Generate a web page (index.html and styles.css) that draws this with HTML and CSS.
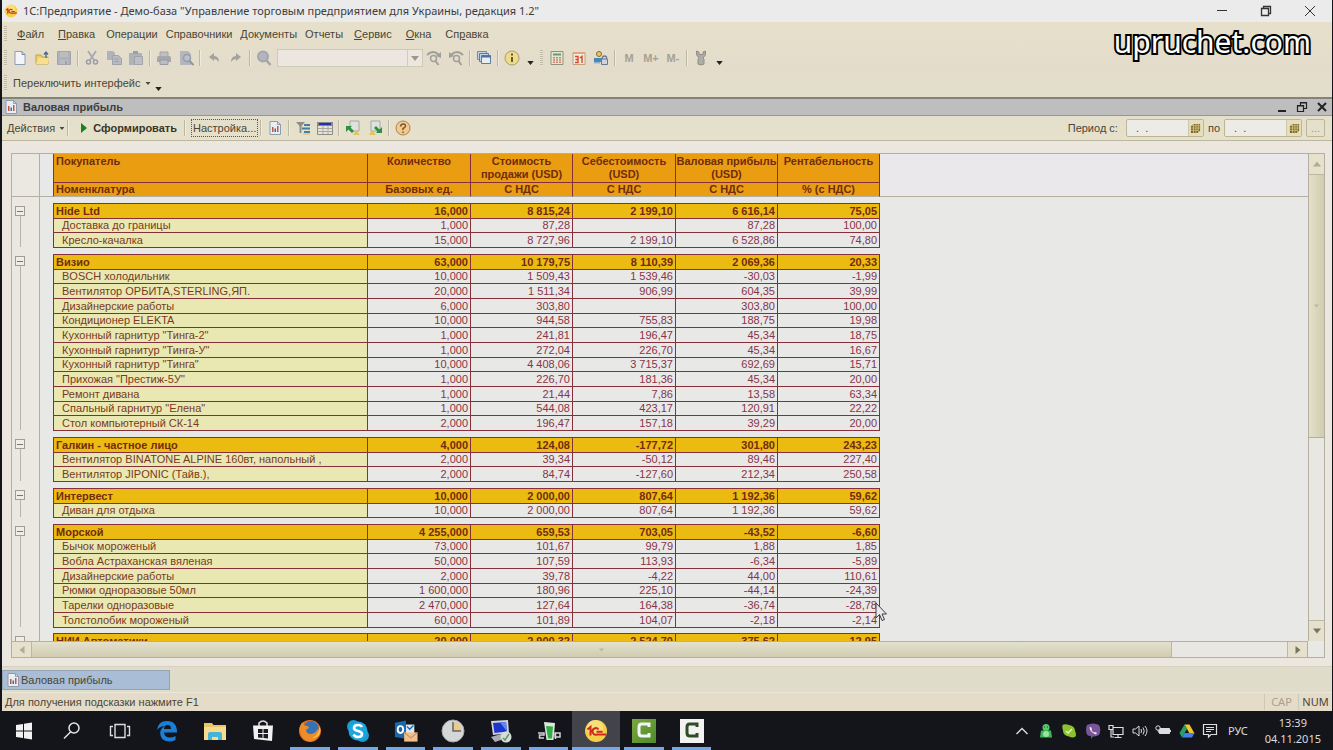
FILE: index.html
```html
<!DOCTYPE html>
<html lang="ru">
<head>
<meta charset="utf-8">
<title>1С:Предприятие - Валовая прибыль</title>
<link rel="stylesheet" href="styles.css">
</head>
<body>
<svg class="defs" aria-hidden="true">
  <symbol id="report" viewBox="0 0 14 14"><path d="M2 .5h7.500l3 3v10H2z" fill="#e9eef3" stroke="#8b9cae"/><path d="M9.500.5v3h3" fill="none" stroke="#8b9cae"/><path d="M4 6h1.500v5H4z" fill="#b8583e"/><path d="M6.500 7.500H8V11H6.500z" fill="#53658f"/><path d="M9 5h1.500v6H9z" fill="#c0574c"/></symbol>
  <symbol id="calgrid" viewBox="0 0 12 12"><path d="M3 1h8v8H9v2H1V3h2z" fill="#7b6a2c"/><path d="M1 5.500h10M1 8h8M3.800 1v10M6.500 1v10M9 1v8M3 3h8" stroke="#d8cb8c" stroke-width=".8" fill="none"/></symbol>
  <symbol id="down" viewBox="0 0 8 5"><path d="M0 0h8L4 5z" fill="currentColor"/></symbol>
  <symbol id="onec" viewBox="0 0 24 24"><circle cx="12" cy="12" r="11" fill="#f6cf4a"/><circle cx="11" cy="9" r="8" fill="#fbe58d" opacity=".7"/><path d="M3.500 10.500L6.500 8V16.500M14.500 10.500a3.300 3.300 0 1 0-1.500 5H22M12.500 12.800h6" fill="none" stroke="#d02a1c" stroke-width="2"/></symbol>
  <symbol id="camt" viewBox="0 0 24 24"><path d="M17 8V5H9.500Q7 5 7 8v6q0 3 3 3h7v-3" fill="none" stroke="currentColor" stroke-width="3"/></symbol>
</svg>

<main class="app">
  <header class="titlebar">
    <svg class="i14"><use href="#onec"/></svg>
    <h1>1С:Предприятие - Демо-база "Управление торговым предприятием для Украины, редакция 1.2"</h1>
    <button aria-label="Свернуть"><svg viewBox="0 0 12 12"><path d="M1 5.500h10" stroke="#333"/></svg></button>
    <button aria-label="Восстановить"><svg viewBox="0 0 12 12"><path d="M1.500 3.500h7v7h-7zM3.500 3V1.500h7v7H9" fill="none" stroke="#333" stroke-width="1.300"/></svg></button>
    <button aria-label="Закрыть"><svg viewBox="0 0 12 12"><path d="M1 1l10 10M11 1L1 11" stroke="#333"/></svg></button>
  </header>

  <section class="bars">
    <p class="watermark">upruchet.com</p>
    <nav class="menu">
      <i class="grip"></i>
      <button class="wide"><u>Ф</u>айл</button><button class="wide"><u>П</u>равка</button><button>Операции</button><button>Справочники</button><button>Документы</button><button>Отчеты</button><button class="wide"><u>С</u>ервис</button><button class="wide"><u>О</u>кна</button><button class="wide">Сп<u>р</u>авка</button>
    </nav>
    <div class="tools">
      <i class="grip"></i>
      <button aria-label="Новый"><svg viewBox="0 0 16 16"><path d="M3 1.500h7l3 3v10H3z" fill="#f3f5f8" stroke="#8b9fb5"/><path d="M10 1.500v3h3" fill="none" stroke="#6f8bab"/></svg></button>
      <button aria-label="Открыть"><svg viewBox="0 0 16 16"><path d="M2 14V5h5l1 2h6v7z" fill="#f0cf66" stroke="#c2a14a"/><path d="M2 14l2-6h11l-1 6z" fill="#f7df8d"/><path d="M12 8V3M10 4.500L12 2l2 2.500" fill="none" stroke="#4d6890" stroke-width="1.300"/></svg></button>
      <button aria-label="Сохранить"><svg viewBox="0 0 16 16"><path d="M1.500 1.500h13v13h-13z" fill="#b0b2ba" stroke="#a3a5ad"/><path d="M4 2h8v5H4zM4 10h8v4H4z" fill="#bcbdc3"/><path d="M9 11h2v3H9z" fill="#a0a2aa"/></svg></button>
      <i class="sep"></i>
      <button aria-label="Вырезать"><svg viewBox="0 0 16 16"><path d="M4 1l6 9M12 1L6 10" stroke="#a6a9b3" stroke-width="1.800"/><circle cx="4.500" cy="12" r="2" fill="none" stroke="#999da8" stroke-width="1.500"/><circle cx="11.500" cy="12" r="2" fill="none" stroke="#999da8" stroke-width="1.500"/></svg></button>
      <button aria-label="Копировать"><svg viewBox="0 0 16 16"><path d="M1 1h6l2 2v7H1z" fill="#b0b3bb"/><path d="M6.500 5.500h6l3 3v6h-9z" fill="#b9bbc1" stroke="#a0a3ac"/><path d="M8 9h5M8 11.500h5" stroke="#a0a3ac"/></svg></button>
      <button aria-label="Вставить"><svg viewBox="0 0 16 16"><path d="M1 3h13v12H1z" fill="#b0b2b9"/><path d="M5 1h5v3H5z" fill="#9c9fa8"/><path d="M6.500 6.500h8v8h-8z" fill="#bdbfc5" stroke="#a0a3ac"/></svg></button>
      <i class="sep"></i>
      <button aria-label="Печать"><svg viewBox="0 0 16 16"><path d="M4 2h8v5H4z" fill="#c0c0c2" stroke="#a3a4a8"/><path d="M3 6h10q2 0 2 2v4H1V8q0-2 2-2z" fill="#a6a7ad"/><path d="M4 10h8v4.500H4z" fill="#bcbdc3" stroke="#999aa2"/></svg></button>
      <button aria-label="Просмотр"><svg viewBox="0 0 16 16"><path d="M2 1h8l3 3v11H2z" fill="#b3b6be"/><circle cx="9" cy="8" r="3.500" fill="#bdc0c6" stroke="#999ca6" stroke-width="1.500"/><path d="M11.500 11l4 4" stroke="#92959f" stroke-width="2"/></svg></button>
      <i class="sep"></i>
      <button aria-label="Отменить"><svg viewBox="0 0 16 16"><path d="M3 7l5-4v3q5 0 5 6-2-3-5-3v2z" fill="#a2a29e"/></svg></button>
      <button aria-label="Вернуть"><svg viewBox="0 0 16 16"><path d="M13 7L8 3v3q-5 0-5 6 2-3 5-3v2z" fill="#a2a29e"/></svg></button>
      <i class="sep"></i>
      <button aria-label="Найти"><svg viewBox="0 0 16 16"><circle cx="7" cy="6.500" r="5" fill="#b2b5bb" stroke="#a3a6ae" stroke-width="2"/><path d="M10.500 10.500l4 4.500" stroke="#a3a6ad" stroke-width="2.500"/></svg></button>
      <label class="combo"><input type="text" aria-label="Строка поиска"><button aria-label="Список"><svg><use href="#down"/></svg></button></label>
      <button aria-label="Найти следующий"><svg viewBox="0 0 16 16"><path d="M1 5q6-6 12 0" fill="none" stroke="#a09f9c" stroke-width="2"/><path d="M15 2v6l-5-2z" fill="#a09f9c"/><circle cx="7.500" cy="8.500" r="3" fill="none" stroke="#a09f9c" stroke-width="1.500"/><path d="M9.500 11l3 4" stroke="#a09f9c" stroke-width="2"/></svg></button>
      <button aria-label="Найти предыдущий"><svg viewBox="0 0 16 16"><path d="M15 5Q9-1 3 5" fill="none" stroke="#a09f9c" stroke-width="2"/><path d="M1 2v6l5-2z" fill="#a09f9c"/><circle cx="8.500" cy="8.500" r="3" fill="none" stroke="#a09f9c" stroke-width="1.500"/><path d="M10.500 11l3 4" stroke="#a09f9c" stroke-width="2"/></svg></button>
      <i class="sep"></i>
      <button aria-label="Окна"><svg viewBox="0 0 16 16"><path d="M1.500 1.500h9v8h-9z" fill="#c5d4e5" stroke="#6d8db0"/><path d="M3.500 3.500h9v8h-9z" fill="#c5d4e5" stroke="#5a7ca6"/><path d="M5.500 5.500h9v8h-9z" fill="#e8edf2" stroke="#5a7ca6"/><path d="M5 6.500h10" stroke="#4d72a0" stroke-width="2"/></svg></button>
      <i class="sep"></i>
      <button aria-label="О программе"><svg viewBox="0 0 16 16"><circle cx="8" cy="8" r="7" fill="#eedc8b" stroke="#aa9c71"/><path d="M7 7h2v5H7zM7 3.500h2v2H7z" fill="#625b34"/></svg></button>
      <span class="more"><svg><use href="#down"/></svg></span>
      <i class="grip grip-mid"></i>
      <button aria-label="Калькулятор"><svg viewBox="0 0 16 16"><path d="M2 1.500h12v13H2z" fill="#e7e5d2" stroke="#8f917f"/><path d="M4 3.500h8v2H4z" fill="#58a173"/><path d="M5 7v6M8 7v6M11 7v6" stroke="#c06a4f" stroke-width="1.500" stroke-dasharray="1.500 .8"/></svg></button>
      <button aria-label="Календарь"><svg viewBox="0 0 16 16"><path d="M2 2.500h12v12H2z" fill="#f3ead9" stroke="#c3a07c"/><path d="M2 2h12v2H2z" fill="#e2a57e"/><path d="M4 6.500h3v6H4M4.500 9.500H7M9 8l2-1.500V13" fill="none" stroke="#d6482e" stroke-width="1.400"/></svg></button>
      <button aria-label="Пользователи"><svg viewBox="0 0 16 16"><circle cx="6" cy="4" r="2.500" fill="#ecc75d" stroke="#816e36"/><path d="M1 8h9v4H1z" fill="#4c86b4"/><path d="M1 12h6v1.500H1z" fill="#8fb4d0"/><path d="M9.500 9V7q2-2 4 0v2" fill="none" stroke="#6d7690" stroke-width="1.300"/><path d="M8.500 9h6v5.500h-6z" fill="#cfd3df" stroke="#6d7690"/></svg></button>
      <i class="sep"></i>
      <button class="mem">M</button><button class="mem">M+</button><button class="mem">M-</button>
      <i class="sep"></i>
      <button aria-label="Сервис"><svg viewBox="0 0 16 16"><path d="M3.500 1v3q0 2 2 3v1.500L5 9v5q3 2 6 0V9l-.5-.5V7q2-1 2-3V1L10 2v2.500H6V2z" fill="#aeaca7" stroke="#908e8a"/></svg></button>
      <span class="more"><svg><use href="#down"/></svg></span>
    </div>
    <div class="iface">
      <i class="grip"></i>
      <button>Переключить интерфейс <svg class="tri"><use href="#down"/></svg></button>
      <span class="more"><svg><use href="#down"/></svg></span>
    </div>
  </section>

  <section class="doc">
    <header class="doctitle">
      <svg class="i14"><use href="#report"/></svg>
      <h2>Валовая прибыль</h2>
      <button aria-label="Свернуть окно"><svg viewBox="0 0 12 12"><path d="M2 10h8" stroke="#222" stroke-width="2"/></svg></button>
      <button aria-label="Восстановить окно"><svg viewBox="0 0 12 12"><path d="M1.500 4.500h6v6h-6zM1 5h7M4.500 4V1.500h6v6H8M4 2h7" fill="none" stroke="#222" stroke-width="1.200"/></svg></button>
      <button aria-label="Закрыть окно"><svg viewBox="0 0 12 12"><path d="M2 2l8 8M10 2l-8 8" stroke="#222" stroke-width="2"/></svg></button>
    </header>
    <div class="doctools">
      <button class="actions">Действия <svg class="tri"><use href="#down"/></svg></button>
      <i class="sep"></i>
      <button class="run"><svg viewBox="0 0 6 10"><path d="M0 0l6 5-6 5z" fill="#188023"/></svg>Сформировать</button>
      <i class="sep"></i>
      <button class="setup">Настройка...</button>
      <i class="sep"></i>
      <button class="ib" aria-label="Отчет"><svg class="small"><use href="#report"/></svg></button>
      <i class="sep"></i>
      <button class="ib" aria-label="Отбор"><svg viewBox="0 0 16 16"><path d="M1 2h9L6.500 6v7h-2V6z" fill="#8d8f83"/><path d="M9 5h6M7 8.500h8M9 12h6" stroke="#427ea5" stroke-width="2"/><path d="M8 14h7" stroke="#e0b858"/></svg></button>
      <button class="ib" aria-label="Шапка"><svg viewBox="0 0 16 16"><path d="M.5 2.500h15v12H.5z" fill="#e5e3da" stroke="#8e8d84"/><path d="M0 2h16v4H0z" fill="#85868f"/><path d="M2 3h12v2H2z" fill="#2730a8"/><path d="M1 8.500h14M1 11.500h14M6 6v8M11 6v8" stroke="#aaa9a0"/></svg></button>
      <i class="sep"></i>
      <button class="ib" aria-label="Восстановить значения"><svg viewBox="0 0 16 16"><path d="M5 1h9v10H5z" fill="#dfe3de" stroke="#a2aaa8"/><path d="M8 15l3-5 4 5z" fill="#e6c25a"/><path d="M1 6h6L5.500 7.500 9 11l-2 2-3.500-3.500L1 12z" fill="#2d8f3f"/></svg></button>
      <button class="ib" aria-label="Сохранить значения"><svg viewBox="0 0 16 16"><path d="M4 1h9v10H4z" fill="#dfe3de" stroke="#a2aaa8"/><path d="M2 15l3-5 4 5z" fill="#e6c25a"/><path d="M15 13H9l1.500-1.500L7 8l2-2 3.500 3.500L15 7z" fill="#2d8f3f"/></svg></button>
      <i class="sep"></i>
      <button class="ib" aria-label="Справка"><svg viewBox="0 0 16 16"><circle cx="8" cy="8" r="7" fill="#f3c98c" stroke="#ab8458"/><path d="M5.500 6.500Q6 4 8.200 4q2.500 0 2.300 2Q10.300 7.500 8 8.500V10M8 11.500v1.500" fill="none" stroke="#79542f" stroke-width="1.500"/></svg></button>
      <div class="period">
        <label for="from">Период с:</label>
        <span class="date"><input id="from" type="text" value=" .  ."><button aria-label="Выбрать начало"><svg><use href="#calgrid"/></svg></button></span>
        <label for="to">по</label>
        <span class="date"><input id="to" type="text" value=" .  ."><button aria-label="Выбрать конец"><svg><use href="#calgrid"/></svg></button></span>
        <button class="dots">...</button>
      </div>
    </div>

    <div class="sheet">
      <div class="grid">
        <table>
          <colgroup><col class="c-tree"><col class="c-gap"><col class="c-name"><col class="c-a"><col class="c-b"><col class="c-a"><col class="c-b"><col class="c-a"><col></colgroup>
          <thead>
            <tr class="h1"><td class="tree" rowspan="2"></td><td class="gap" rowspan="2"></td><th class="name">Покупатель</th><th>Количество</th><th>Стоимость продажи (USD)</th><th>Себестоимость (USD)</th><th>Валовая прибыль (USD)</th><th>Рентабельность</th><td class="rest" rowspan="2"></td></tr>
            <tr class="h2"><th class="name">Номенклатура</th><th>Базовых ед.</th><th>С НДС</th><th>С НДС</th><th>С НДС</th><th>% (с НДС)</th></tr>
          </thead>
          <tbody>
            <tr class="space first"><td class="tree" rowspan="4"><div class="node"><button aria-label="Свернуть группу"></button></div></td><td rowspan="4"></td><td class="line" colspan="6"></td></tr>
            <tr class="g"><th>Hide Ltd</th><td>16,000</td><td>8 815,24</td><td>2 199,10</td><td>6 616,14</td><td>75,05</td></tr>
            <tr><th>Доставка до границы</th><td>1,000</td><td>87,28</td><td></td><td>87,28</td><td>100,00</td></tr>
            <tr><th>Кресло-качалка</th><td>15,000</td><td>8 727,96</td><td>2 199,10</td><td>6 528,86</td><td>74,80</td></tr>
          </tbody>
          <tbody>
            <tr class="space"><td class="tree" rowspan="13"><div class="node"><button aria-label="Свернуть группу"></button></div></td><td rowspan="13"></td><td class="line" colspan="6"></td></tr>
            <tr class="g"><th>Визио</th><td>63,000</td><td>10 179,75</td><td>8 110,39</td><td>2 069,36</td><td>20,33</td></tr>
            <tr><th>BOSCH холодильник</th><td>10,000</td><td>1 509,43</td><td>1 539,46</td><td>-30,03</td><td>-1,99</td></tr>
            <tr><th>Вентилятор ОРБИТА,STERLING,ЯП.</th><td>20,000</td><td>1 511,34</td><td>906,99</td><td>604,35</td><td>39,99</td></tr>
            <tr><th>Дизайнерские работы</th><td>6,000</td><td>303,80</td><td></td><td>303,80</td><td>100,00</td></tr>
            <tr><th>Кондиционер ELEKTA</th><td>10,000</td><td>944,58</td><td>755,83</td><td>188,75</td><td>19,98</td></tr>
            <tr><th>Кухонный гарнитур "Тинга-2"</th><td>1,000</td><td>241,81</td><td>196,47</td><td>45,34</td><td>18,75</td></tr>
            <tr><th>Кухонный гарнитур "Тинга-У"</th><td>1,000</td><td>272,04</td><td>226,70</td><td>45,34</td><td>16,67</td></tr>
            <tr><th>Кухонный гарнитур "Тинга"</th><td>10,000</td><td>4 408,06</td><td>3 715,37</td><td>692,69</td><td>15,71</td></tr>
            <tr><th>Прихожая "Престиж-5У"</th><td>1,000</td><td>226,70</td><td>181,36</td><td>45,34</td><td>20,00</td></tr>
            <tr><th>Ремонт дивана</th><td>1,000</td><td>21,44</td><td>7,86</td><td>13,58</td><td>63,34</td></tr>
            <tr><th>Спальный гарнитур "Елена"</th><td>1,000</td><td>544,08</td><td>423,17</td><td>120,91</td><td>22,22</td></tr>
            <tr><th>Стол компьютерный СК-14</th><td>2,000</td><td>196,47</td><td>157,18</td><td>39,29</td><td>20,00</td></tr>
          </tbody>
          <tbody>
            <tr class="space"><td class="tree" rowspan="4"><div class="node"><button aria-label="Свернуть группу"></button></div></td><td rowspan="4"></td><td class="line" colspan="6"></td></tr>
            <tr class="g"><th>Галкин - частное лицо</th><td>4,000</td><td>124,08</td><td>-177,72</td><td>301,80</td><td>243,23</td></tr>
            <tr><th>Вентилятор BINATONE ALPINE 160вт, напольный ,</th><td>2,000</td><td>39,34</td><td>-50,12</td><td>89,46</td><td>227,40</td></tr>
            <tr><th>Вентилятор JIPONIC (Тайв.),</th><td>2,000</td><td>84,74</td><td>-127,60</td><td>212,34</td><td>250,58</td></tr>
          </tbody>
          <tbody>
            <tr class="space"><td class="tree" rowspan="3"><div class="node"><button aria-label="Свернуть группу"></button></div></td><td rowspan="3"></td><td class="line" colspan="6"></td></tr>
            <tr class="g"><th>Интервест</th><td>10,000</td><td>2 000,00</td><td>807,64</td><td>1 192,36</td><td>59,62</td></tr>
            <tr><th>Диван для отдыха</th><td>10,000</td><td>2 000,00</td><td>807,64</td><td>1 192,36</td><td>59,62</td></tr>
          </tbody>
          <tbody>
            <tr class="space"><td class="tree" rowspan="8"><div class="node"><button aria-label="Свернуть группу"></button></div></td><td rowspan="8"></td><td class="line" colspan="6"></td></tr>
            <tr class="g"><th>Морской</th><td>4 255,000</td><td>659,53</td><td>703,05</td><td>-43,52</td><td>-6,60</td></tr>
            <tr><th>Бычок мороженый</th><td>73,000</td><td>101,67</td><td>99,79</td><td>1,88</td><td>1,85</td></tr>
            <tr><th>Вобла Астраханская вяленая</th><td>50,000</td><td>107,59</td><td>113,93</td><td>-6,34</td><td>-5,89</td></tr>
            <tr><th>Дизайнерские работы</th><td>2,000</td><td>39,78</td><td>-4,22</td><td>44,00</td><td>110,61</td></tr>
            <tr><th>Рюмки одноразовые 50мл</th><td>1 600,000</td><td>180,96</td><td>225,10</td><td>-44,14</td><td>-24,39</td></tr>
            <tr><th>Тарелки одноразовые</th><td>2 470,000</td><td>127,64</td><td>164,38</td><td>-36,74</td><td>-28,78</td></tr>
            <tr><th>Толстолобик мороженый</th><td>60,000</td><td>101,89</td><td>104,07</td><td>-2,18</td><td>-2,14</td></tr>
          </tbody>
          <tbody>
            <tr class="space last"><td class="tree" rowspan="2"><div class="node"><button aria-label="Свернуть группу"></button></div></td><td rowspan="2"></td><td class="line" colspan="6"></td></tr>
            <tr class="g"><th>НИИ Автоматики</th><td>20,000</td><td>2 900,32</td><td>2 524,70</td><td>375,62</td><td>12,95</td></tr>
          </tbody>
        </table>
        <svg class="cursor" viewBox="0 0 12 20"><path d="M1 1v15l3.500-3.500L7 18.500l2.500-1L7 12h4.500z" fill="#e9e9e9" stroke="#3c3c48"/></svg>
      </div>
      <div class="vbar">
        <button aria-label="Вверх"><svg class="up"><use href="#down"/></svg></button>
        <div class="thumb"><svg><use href="#down"/></svg></div>
        <button class="end" aria-label="Вниз"><svg><use href="#down"/></svg></button>
      </div>
      <div class="hbar">
        <button aria-label="Влево"><svg class="left"><use href="#down"/></svg></button>
        <div class="thumb"><svg><use href="#down"/></svg></div>
        <button class="end" aria-label="Вправо"><svg class="right"><use href="#down"/></svg></button>
      </div>
    </div>
  </section>

  <div class="windows"><button><svg class="i14"><use href="#report"/></svg>Валовая прибыль</button></div>
  <footer class="status"><p>Для получения подсказки нажмите F1</p><span class="off">CAP</span><span>NUM</span></footer>
</main>

<footer class="taskbar">
  <button aria-label="Пуск"><svg viewBox="0 0 24 24"><path d="M4 6l7-1v6.500H4zM12 4.800L20 3.500v8h-8zM4 12.500h7V19l-7-1zM12 12.500h8v8l-8-1.300z" fill="#f2f2f2"/></svg></button>
  <button aria-label="Поиск"><svg viewBox="0 0 24 24"><circle cx="14" cy="9" r="5" fill="none" stroke="#e6e6e6" stroke-width="1.500"/><path d="M10.500 13L4 19.500" stroke="#e6e6e6" stroke-width="1.500"/></svg></button>
  <button aria-label="Представление задач"><svg viewBox="0 0 24 24"><path d="M7 5.500h10v13H7zM5 7.500H2.500v9H5M19 7.500h2.500v9H19" fill="none" stroke="#ddd" stroke-width="1.400"/></svg></button>
  <button aria-label="Edge"><svg viewBox="0 0 24 24"><path d="M2 11Q3 2 12 2q10 0 10 11.500H9q.5 5 6 5 3 0 5.500-1.500v4Q17.500 22.500 14 22.500 5 22 5.200 13.500 5.500 9 10 7 5 7 2 11zM9 10h7q0-4-3.500-4T9 10z" fill="#1b7fd8"/></svg></button>
  <button aria-label="Проводник"><svg viewBox="0 0 24 24"><path d="M1 4h8l1.500 2H23v15H1z" fill="#e9c468"/><path d="M1 8h22v13H1z" fill="#f6dc8f"/><path d="M5 21v-6q0-2 2-2h10q2 0 2 2v6h-4v-3H9v3z" fill="#48b4d5"/></svg></button>
  <button aria-label="Магазин"><svg viewBox="0 0 24 24"><path d="M8 7V4q4-4 8 0v3" fill="none" stroke="#ddd" stroke-width="1.600"/><path d="M2 6.500h20l-1 15.500-18-2z" fill="#f1f1f1"/><path d="M7 10h4.500v4H7zM12.500 10H17v4h-4.500zM7 15h4.500v4L7 18.500zM12.500 15H17v4.500l-4.500-.5z" fill="#1a1a20"/></svg></button>
  <button class="on" aria-label="Firefox"><svg viewBox="0 0 24 24"><circle cx="12" cy="12" r="11" fill="#e36b22"/><circle cx="13" cy="9.500" r="7.500" fill="#3473b8"/><path d="M1.500 9Q3 3 6 3q-1 2 .5 3.500 3 0 4.500 1.500-.5 2-3 2.500Q8 15 13 15q5-.5 6.500-5Q22 13 20 17q-4 6-9 5.500Q2 21 1.500 9z" fill="#ee8c27"/><path d="M21 7q1 9-7 12 8 0 8.500-8z" fill="#f4c542"/></svg></button>
  <button class="on" aria-label="Skype"><svg viewBox="0 0 24 24"><circle cx="7.500" cy="7.500" r="6.500" fill="#169ed5"/><circle cx="16.500" cy="16.500" r="6.500" fill="#169ed5"/><circle cx="12" cy="12" r="9.500" fill="#1aa6df"/><path d="M16 8q-1-2-4-2-4 0-4 3 0 2 4 3t4 3q0 3-4 3-3 0-4.500-2.500" fill="none" stroke="#fff" stroke-width="2.600"/></svg></button>
  <button class="on" aria-label="Outlook"><svg viewBox="0 0 26 24"><path d="M1 3l12-2.500v20L1 18.500z" fill="#1769ad"/><path d="M13 5h9v10h-9z" fill="#dce8f2"/><path d="M14 7l3 3 4-4" fill="none" stroke="#1769ad" stroke-width="1.500"/><ellipse cx="7" cy="10.500" rx="3" ry="3.700" fill="none" stroke="#fff" stroke-width="2"/><path d="M11 13.500h14.500v10H11z" fill="#f2c08a"/><path d="M11 13.500l7.200 6 7.300-6" fill="none" stroke="#b87d48"/></svg></button>
  <button class="on" aria-label="Часы"><svg viewBox="0 0 24 24"><circle cx="12" cy="12" r="11" fill="#d4d6d8" stroke="#a5a8ac"/><path d="M12 12V3q8 0 9 9z" fill="#e9ca8f"/><path d="M12 3v9h8" fill="none" stroke="#666" stroke-width="1.500"/></svg></button>
  <button class="on" aria-label="Удаленный рабочий стол"><svg viewBox="0 0 24 24"><path d="M2 2l17-1 1 13-16 2z" fill="#cfd3d9"/><path d="M4 4l13-1 1 9.500-12.500 1.500z" fill="#1d35c8"/><path d="M11 3.500L17 3l1 9.500z" fill="#6187ec"/><path d="M2 18l10-3v6l-6 2z" fill="#a9adb2"/><circle cx="17" cy="18" r="5.500" fill="#d8dcda"/><path d="M14 19l2 2 4-6" fill="none" stroke="#5a9b5a" stroke-width="1.500"/></svg></button>
  <button class="on" aria-label="Сервер"><svg viewBox="0 0 24 24"><path d="M7 3l11 1-1.500 17h-7z" fill="#dfe6df"/><path d="M9 7l7 .5-1 12h-4z" fill="#2fae43"/><path d="M1 14h6v2H2.500v3H7M18 14h5v4h-5zM18.500 14v6" fill="none" stroke="#d2d2d2" stroke-width="1.500"/></svg></button>
  <button class="on active" aria-label="1С:Предприятие"><svg><use href="#onec"/></svg></button>
  <button class="on" aria-label="Camtasia"><svg class="green"><use href="#camt"/></svg></button>
  <button class="on" aria-label="Camtasia Recorder"><svg class="white"><use href="#camt"/></svg></button>
  <div class="tray">
    <svg viewBox="0 0 16 16"><path d="M2.500 11L8 5.500l5.500 5.500" fill="none" stroke="#ddd" stroke-width="1.400"/></svg>
    <svg viewBox="0 0 16 16"><circle cx="8" cy="4.500" r="3.500" fill="#55c96b"/><path d="M3 7.500h10l1 7H2z" fill="#3fb757"/><circle cx="8" cy="11" r="3" fill="#96e59c"/><path d="M6 4h1M9 4h1" stroke="#12481d"/></svg>
    <svg viewBox="0 0 16 16"><path d="M1.500 2Q4 .5 8 2q6 1 6 6 2 4 0 6-3 1-6-.5-6-1-6-6-1-3-.5-5.500z" fill="#8cc22e"/><path d="M5 8l2 2 4-4" fill="none" stroke="#e5f4be" stroke-width="1.500"/></svg>
    <svg viewBox="0 0 16 16"><path d="M2 2q6-3 12 0 2.500 5 0 10-3 1.500-6 1.500L6 16v-3q-3 0-4-1.500Q0 6 2 2z" fill="#7a5599"/><path d="M4.500 4.500q.5 5 6.500 7l1-1.500-2-1-1 .5Q7 8.500 6.500 7l.5-1L6 4z" fill="#eee"/></svg>
    <svg viewBox="0 0 16 16"><path d="M5 4.500h10v7H5zM10 12v2.500M6.500 14.500h7M1 2.500h4v4H1zM3 7v7h3" fill="none" stroke="#ddd" stroke-width="1.200"/></svg>
    <svg viewBox="0 0 16 16"><path d="M1 6h2.500L7 3v10l-3.500-3H1zM9 6q1 2 0 4M11 4.500q2.500 3.500 0 7M13 3q4 5 0 10" fill="none" stroke="#ddd"/></svg>
    <svg viewBox="0 0 16 16"><path d="M4.500 5.500h10v5h-10z" fill="#ddd" stroke="#ddd"/><path d="M15 7h1v2h-1z" fill="#ddd"/><circle cx="3" cy="5" r="2.200" fill="#14141b" stroke="#ddd"/><path d="M3 7q0 3 2 3" fill="none" stroke="#ddd"/></svg>
    <svg viewBox="0 0 16 16"><path d="M5.500 1.500h5l5 9h-5z" fill="#f1c232"/><path d="M5.500 1.500L8 6l-5 8.500-2.500-4.500z" fill="#28a060"/><path d="M5.500 10h10L13 14.500H3z" fill="#4182e8"/></svg>
    <svg viewBox="0 0 16 16"><path d="M1.500 1.500h13v10H9L6.500 14v-2.500h-5z" fill="none" stroke="#ddd" stroke-width="1.200"/><path d="M4 4.500h8M4 6.500h8M4 8.500h5" stroke="#ddd"/></svg>
    <span>РУС</span>
    <time datetime="2015-11-04T13:39">13:39<br>04.11.2015</time>
  </div>
</footer>
</body>
</html>
```
FILE: styles.css
```css
* { box-sizing: border-box; }
body {
  margin: 0;
  height: 100vh;
  display: flex;
  flex-direction: column;
  overflow: hidden;
  background: #14141b;
  color: #4a4535;
  font: 11px/14px "Liberation Sans", Arial, sans-serif;
}
button, input { font: inherit; color: inherit; }
button { border: 0; padding: 0; background: none; display: flex; align-items: center; justify-content: center; white-space: nowrap; }
h1, h2, p { margin: 0; }
svg { flex: none; display: block; }
.defs { display: none; }
.i14 { width: 14px; height: 14px; }

.app { flex: 1; min-height: 0; display: flex; flex-direction: column; margin: 0 1px 0 2px; background: #e4deca; }

.titlebar { display: flex; align-items: center; height: 22px; padding-left: 2px; background: #ebebeb; }
.titlebar h1 { flex: 1; padding-left: 5px; font: 11px/18px "Noto Sans", sans-serif; color: #3c3c3c; }
.titlebar button { width: 44px; height: 20px; }
.titlebar button svg { width: 12px; height: 12px; }

.bars { position: relative; height: 75px; background: linear-gradient(#e6e0cb, #e4dcca 60%, #e2deca); }
.watermark {
  position: absolute; right: 21px; top: 2px;
  font: 30px/36px "Noto Sans", sans-serif;
  color: #fff;
  -webkit-text-stroke: 4px #000;
  paint-order: stroke fill;
}
.menu, .tools, .iface { display: flex; align-items: center; height: 24px; padding-left: 2px; }
.grip { width: 3px; height: 16px; background: repeating-linear-gradient(#bdb8a6 0 1px, #e9e4d3 1px 2px); }
.menu .grip { margin-right: 3px; }
.menu button { padding: 0 4px; }
.menu .wide { padding: 0 7px; }

.tools .grip { margin-right: 2px; }
.tools .grip-mid { margin: 0 3px; }
.tools > button { width: 22px; height: 22px; }
.tools > button svg { width: 16px; height: 16px; }
.sep { width: 2px; height: 16px; margin: 0 2px; border-left: 1px solid #bdb8a4; border-right: 1px solid #efecdf; }
.combo { display: flex; width: 146px; height: 18px; margin-left: 2px; border: 1px solid #cfc9b8; background: #ebe7e0; }
.combo input { flex: 1; min-width: 0; border: 0; padding: 0; background: none; }
.combo button { width: 15px; border-left: 1px solid #d2ccba; color: #9d9984; }
.combo svg { width: 8px; height: 5px; }
.more { align-self: flex-end; width: 14px; padding: 0 4px 5px; color: #222; }
.more svg { width: 7px; height: 4px; }
.mem { font-weight: 700; color: #a5a193; }
.iface { height: 26px; }
.iface .grip { margin-right: 6px; }
.tri { width: 6px; height: 3px; margin-left: 4px; }

.doc { flex: 1; min-height: 0; display: flex; flex-direction: column; background: #ebe6de; }
.doctitle { display: flex; align-items: center; height: 19px; padding: 0 0 0 2px; background: #bebebe; border-top: 2px solid #83837c; border-bottom: 1px solid #97978f; }
.doctitle h2 { flex: 1; padding-left: 5px; font-size: 11px; line-height: 14px; color: #3d3d3d; }
.doctitle button { width: 20px; }
.doctitle button svg { width: 12px; height: 12px; }

.doctools { display: flex; align-items: center; height: 25px; padding: 0 7px 0 5px; background: linear-gradient(#e3dfcc, #e7e1cb); border-bottom: 1px solid #bdb7a2; }
.run { padding: 0 5px 0 10px; font-weight: 700; color: #3a3626; }
.run svg { width: 6px; height: 10px; margin-right: 6px; }
.setup { height: 18px; margin-left: 3px; padding: 0 1px; border: 1px dotted #5a5646; }
.ib { width: 22px; height: 22px; }
.ib svg { width: 16px; height: 16px; }
.ib .small { width: 14px; height: 14px; }
.period { margin-left: auto; display: flex; align-items: center; gap: 4px; }
.period label:first-child { padding-right: 4px; }
.date { display: flex; width: 78px; height: 18px; border: 1px solid #bdb593; border-radius: 2px; background: #ecebe6; }
.date input { flex: 1; min-width: 0; border: 0; padding: 0 6px; background: none; }
.date button { width: 15px; border-left: 1px solid #cdc6a8; background: #e6dfbf; }
.date svg { width: 11px; height: 11px; }
.dots { width: 19px; height: 18px; border: 1px solid #bdb593; border-radius: 2px; color: #9b957c; }

.sheet {
  flex: 1; min-height: 0;
  display: grid;
  grid-template: minmax(0, 1fr) 16px / minmax(0, 1fr) 16px;
  margin: 12px 7px 8px 9px;
  border: 1px solid #b3b0a2;
  background: #e8e8e7;
}
.grid { position: relative; overflow: hidden; }
.cursor { position: absolute; left: 863px; top: 448px; width: 12px; height: 20px; }

table { width: 100%; table-layout: fixed; border-collapse: separate; border-spacing: 0; line-height: 13px; color: #873447; }
.c-tree { width: 28px; }
.c-gap { width: 13px; }
.c-name { width: 314px; }
.c-a { width: 103px; }
.c-b { width: 102px; }
td, th { padding: 0 2px; border: 0 solid #85303a; text-align: right; white-space: nowrap; overflow: hidden; }
th { color: #7a3a20; }

thead th { border-left-width: 1px; background: #eb9d12; color: #702c0c; text-align: center; vertical-align: top; white-space: normal; }
.h1 th:nth-last-child(2), .h2 th:last-child { border-right-width: 1px; }
.h1 th { height: 28px; padding: 1px 0 0; }
.h2 th { height: 15px; border-top-width: 1px; border-bottom: 1px solid #b3b0a2; }
thead .name.name { text-align: left; padding-left: 2px; }
thead td { border-bottom: 1px solid #b3b0a2; background: #eae8ea; }
thead .gap { background: #e8e8e8; }
.tree.tree { height: 1px; padding: 0; border-right: 1px solid #b3b0a2; background: #ebe8e1; vertical-align: top; }

tbody tr { height: 15px; }
tbody tr:nth-child(3n) { height: 14px; }
tbody tr.space { height: 7px; }
tbody tr.first, tbody tr.last { height: 6px; }
tbody tr:not(.space) > * { border-left-width: 1px; border-top-width: 1px; }
tbody tr:not(.space) > :last-child { border-right-width: 1px; }
tbody th { padding-left: 8px; background: #e9e8b3; text-align: left; font-weight: 400; }
.line { padding: 0; border-top-width: 1px; line-height: 0; }
.first .line { border-top-color: transparent; }
.g > * { background: #ebbb12; color: #742b10; font-weight: 700; }
tbody .g th { padding-left: 2px; font-weight: 700; }
.node { height: 100%; padding: 9px 0 0 3px; }
.node button { width: 10px; height: 10px; border: 1px solid #a19e91; background: linear-gradient(#77746a, #77746a) center / 6px 1px no-repeat #efede6; }
.node::after { content: ""; display: block; width: 5px; height: calc(100% - 10px); margin-left: 5px; border: 1px solid #b7b4a8; border-width: 0 0 1px 1px; }

.vbar, .hbar { display: flex; background: #e9e7e2; }
.vbar { flex-direction: column; border-left: 1px solid #b3b0a2; }
.hbar { border-top: 1px solid #b3b0a2; border-right: 1px solid #b3b0a2; }
.vbar button { height: 21px; border-bottom: 1px solid #bdb99f; background: #e5e1cd; color: #b0ac98; }
.hbar button { width: 20px; border-right: 1px solid #bdb99f; background: #e5e1cd; color: #b0ac98; }
.vbar svg, .hbar svg { width: 8px; height: 6px; }
.vbar .thumb { height: 54%; background: linear-gradient(90deg, #e3e0c8, #cfcdb0); border-bottom: 1px solid #b3b08f; }
.hbar .thumb { width: 88%; background: linear-gradient(#e4e1cc, #d0ccb3); border-right: 1px solid #bdb99f; }
.thumb { display: flex; align-items: center; justify-content: center; color: #bbb69f; }
.thumb.thumb svg { width: 5px; height: 4px; }
.vbar .end { margin-top: auto; border-top: 1px solid #bdb99f; border-bottom: 0; color: #77745f; }
.hbar .end { margin-left: auto; border-left: 1px solid #bdb99f; border-right: 0; color: #77745f; }
.up { transform: rotate(180deg); }
.left { transform: rotate(90deg); }
.right { transform: rotate(-90deg); }

.windows { height: 26px; padding: 3px 0 0; background: #e0dcca; border-top: 1px solid #d6d1c0; }
.windows button { justify-content: flex-start; gap: 1px; width: 168px; height: 20px; padding-left: 3px; background: #a9bdd6; border: 1px solid #95a3b3; }
.status { display: flex; align-items: center; height: 19px; padding-left: 3px; border-top: 1px solid #ebe7d8; background: #e4dcc9; }
.status p { flex: 1; }
.status span { width: 34px; padding: 0 3px; border-left: 1px solid #cfc8b5; font: 11px/16px "Noto Sans", sans-serif; text-align: center; }
.status .off { color: #a8a18e; }

.taskbar { display: flex; height: 39px; background: #14141b; color: #ddd; font: 11px/16px "Noto Sans", sans-serif; }
.taskbar > button { flex: 0 0 48px; position: relative; }
.taskbar > button:nth-child(3n) { flex-basis: 47px; }
.taskbar > button > svg { width: 24px; height: 24px; }
.on::after { content: ""; position: absolute; left: 4px; right: 4px; bottom: 0; height: 3px; background: #75a8e6; }
.active { background: #42434b; }
.active::after { left: 0; right: 0; }
.green { background: linear-gradient(135deg, #7ba83f, #4f8a2b); color: #f4f4f4; }
.white { background: #f2f2f2; color: #2e4c24; }
.tray { margin-left: auto; display: flex; align-items: center; gap: 7px; padding-right: 12px; }
.tray svg { width: 16px; height: 16px; }
.tray svg:nth-child(even) { margin-left: 1px; }
.tray span { padding: 0 10px 0 3px; }
.tray time { text-align: center; }
```
